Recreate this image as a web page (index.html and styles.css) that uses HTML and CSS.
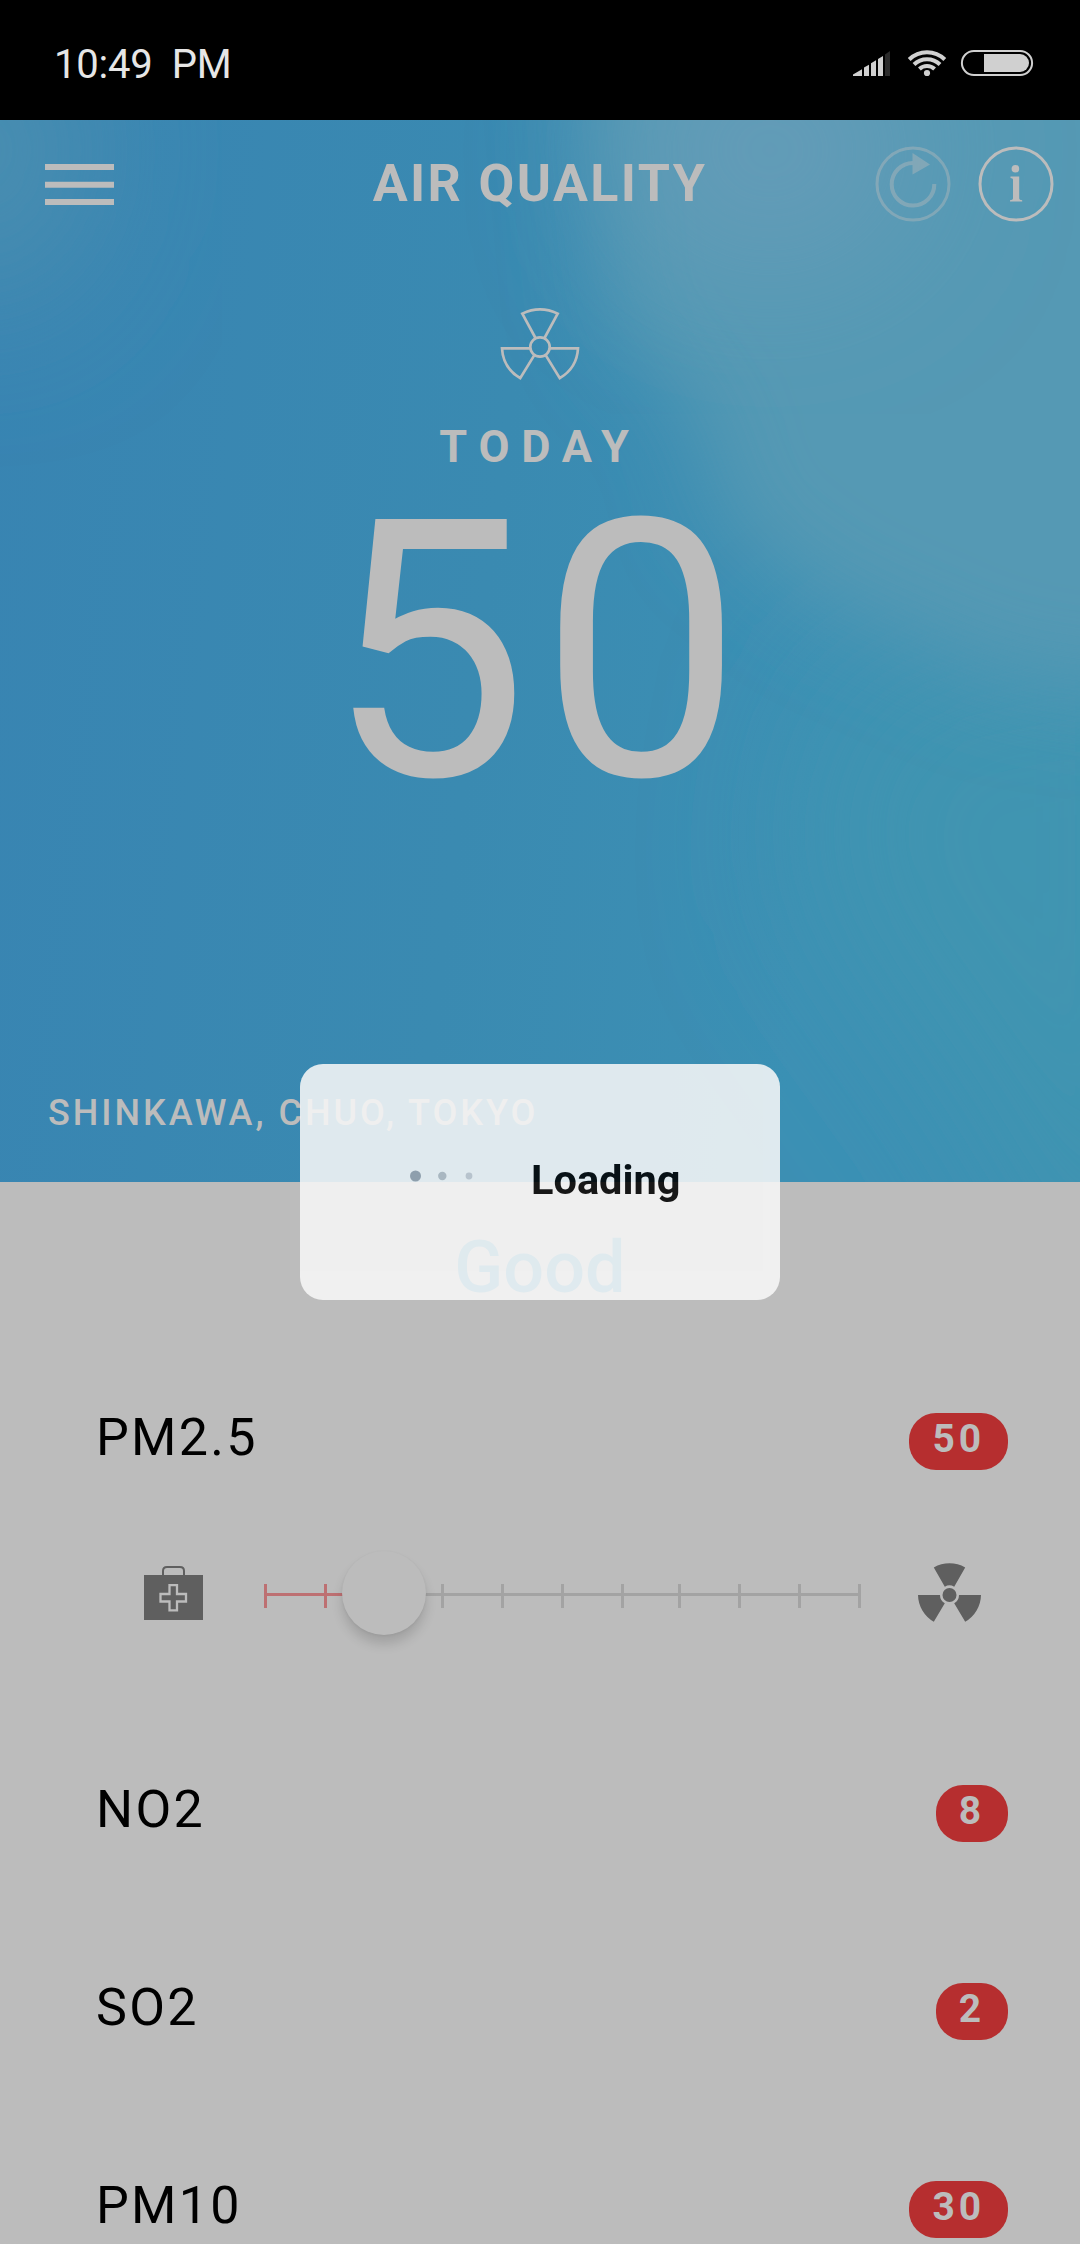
FILE: index.html
```html
<!DOCTYPE html>
<html lang="en">
<head>
<meta charset="utf-8">
<title>Air Quality</title>
<link rel="stylesheet" href="styles.css">
</head>
<body>
<div class="status">
  <div class="clock"><span>10:49</span><span>PM</span></div>
  <svg class="status-icons" width="182" height="30" viewBox="852 48 182 30">
    <path fill="#d0d0d0" d="M853 76v-1.600l9-5.200v6.800zM864 76v-8.500l5-2.700v11.200zM871 76v-12.800l5-3v15.800zM878 76v-17l5-3v20z"/>
    <path fill="#2b2b2b" d="M885 76V54.500l5-3.500v25z"/>
    <g fill="none" stroke="#d0d0d0" stroke-width="4"><path d="M909.200 59.500a25.500 25.500 0 0 1 35.600 0"/><path d="M914 64.500a18.500 18.500 0 0 1 26 0"/><path d="M919.400 69a11 11 0 0 1 15.200 0"/></g>
    <circle cx="927" cy="73" r="3.100" fill="#d0d0d0"/>
    <rect x="961.900" y="51" width="70.200" height="24" rx="12" fill="none" stroke="#d0d0d0" stroke-width="2"/>
    <path fill="#d0d0d0" d="M984 54h36a9 9 0 0 1 0 18h-36z"/>
  </svg>
</div>
<main>
  <section class="hero">
    <svg class="sky" viewBox="0 0 1080 1062" aria-hidden="true">
      <defs>
        <filter id="soft" x="-30%" y="-30%" width="160%" height="160%"><feGaussianBlur stdDeviation="45"/></filter>
        <filter id="softer" x="-60%" y="-60%" width="220%" height="220%"><feGaussianBlur stdDeviation="75"/></filter>
      </defs>
      <path fill="#3f94b1" filter="url(#softer)" d="M840 560L1200 480V1200H1080L980 1010L800 760z"/>
      <path fill="#5499b4" filter="url(#soft)" d="M580-120H1220V590L1000 560L820 480L720 400L700 300L610 200z"/>
      <ellipse fill="#659cb8" filter="url(#softer)" cx="770" cy="30" rx="140" ry="120"/>
      <ellipse fill="#4b8fb0" filter="url(#softer)" cx="-20" cy="30" rx="110" ry="150"/>
    </svg>
    <header class="bar">
      <svg width="69" height="42" viewBox="0 0 69 42" fill="#bcbcbc"><path d="M0 0h69v6H0zM0 17.800h69v6H0zM0 35h69v6H0z"/></svg>
      <h1>AIR QUALITY</h1>
      <div class="actions">
        <svg class="refresh" width="76" height="76" viewBox="-38 -38 76 76"><circle r="36" fill="none" stroke="#bcbcbc" stroke-width="3"/><path d="M0-21A21.300 21.300 0 1 0 21.300 0" fill="none" stroke="#bcbcbc" stroke-width="4"/><path fill="#bcbcbc" d="M-.5-31L17-19.500-.5-9.500z"/></svg>
        <svg width="76" height="76" viewBox="-38 -38 76 76"><circle r="36" fill="none" stroke="#bcbcbc" stroke-width="3"/><g fill="#bcbcbc"><circle cx="-.6" cy="-15.200" r="3.800"/><path d="M-5.500-7.500H3.200V14.500q0 1.500 3 1.700v1.300H-6v-1.300q3-.2 3-1.700v-19q0-1.200-2.500-1.500z"/></g></svg>
      </div>
    </header>
    <svg class="hazard" width="84" height="78" viewBox="-42 -42 84 78" fill="none" stroke="#bcbcbc" stroke-width="2.700">
      <circle r="9.700"/>
      <path d="M-4.500-9L-17.700-33.400Q0-42 17.700-33.400L4.500-9M-10 1.300H-38Q-37 21-19.800 31.200L-5.800 8.400M10 1.300H38Q37 21 19.800 31.200L5.800 8.400"/>
    </svg>
    <p class="day">TODAY</p>
    <p class="index">50</p>
    <p class="place">SHINKAWA, CHUO, TOKYO</p>
  </section>
  <section class="levels">
    <h2>Good</h2>
    <div class="row first"><span class="name">PM2.5</span><span class="badge">50</span></div>
    <div class="scale">
      <svg width="59" height="56" viewBox="0 0 59 56"><path d="M19 10V5q0-4 4-4h13q4 0 4 4v5" fill="none" stroke="#5f5f5f" stroke-width="2"/><path fill="#5f5f5f" d="M0 9h59v45H0z"/><path d="M25.500 19.200h7.500v8.800h9v7.500h-9v8.800h-7.500v-8.800h-9V28h9z" fill="none" stroke="#bcbcbc" stroke-width="2.300"/></svg>
      <div class="slider">
        <i class="on"></i><i class="on"></i><i class="on"></i><i class="near"></i><i></i><i></i><i></i><i class="near"></i><i></i><i></i><i></i>
        <b class="knob"></b>
      </div>
      <svg width="63" height="60" viewBox="-31.500 -32 63 60" fill="#5f5f5f"><circle r="7"/><path d="M-4.700-8.300L-15.700-27.500A31.500 31.500 0 0 1 15.700-27.500L4.700-8.300A9.500 9.500 0 0 0-4.700-8.300zM-9.500 0H-31.500A31.500 31.500 0 0 0-15.700 26.700L-4.700 8.200A9.500 9.500 0 0 1-9.500 0zM9.500 0H31.500A31.500 31.500 0 0 1 15.700 26.700L4.700 8.200A9.500 9.500 0 0 0 9.500 0z"/></svg>
    </div>
    <div class="row"><span class="name">NO2</span><span class="badge">8</span></div>
    <div class="row"><span class="name">SO2</span><span class="badge">2</span></div>
    <div class="row"><span class="name">PM10</span><span class="badge">30</span></div>
  </section>
</main>
<div class="loading">
  <svg width="64" height="12" viewBox="0 0 64 12"><circle cx="5.500" cy="6" r="5.500" fill="#9ba2ad"/><circle cx="32.300" cy="6" r="4.200" fill="#b9bec4"/><circle cx="59" cy="6" r="3.400" fill="#c9ccd1"/></svg>
  <span>Loading</span>
</div>
</body>
</html>
```
FILE: styles.css
```css
* { box-sizing: border-box; margin: 0; padding: 0; }
body { width: 1080px; height: 2244px; overflow: hidden; position: relative; background: #bcbcbc; font-family: Roboto, sans-serif; }
svg { display: block; flex: none; }
.status { height: 120px; background: #000; display: flex; justify-content: space-between; padding: 0 46px 0 54px; }
.clock { display: flex; gap: 19px; padding-top: 41px; font-size: 40px; line-height: 47px; letter-spacing: -0.2px; color: #e6e6e6; }
.status-icons { margin-top: 48px; }
.hero {
  position: relative; isolation: isolate; overflow: hidden;
  height: 1062px;
  display: flex; flex-direction: column; align-items: center;
  color: #bcbcbc;
  background: linear-gradient(97deg, #3884b2 0%, #3a8ab1 45%, #3c90b4 75%);
}
.sky { position: absolute; inset: 0; z-index: -1; width: 100%; height: 100%; }
.bar { width: 100%; height: 129px; display: grid; grid-template-columns: 1fr auto 1fr; padding: 0 26px 0 45px; }
.bar > svg { margin-top: 44px; }
h1 { font-size: 52px; line-height: 60px; letter-spacing: 2.4px; padding-top: 34px; margin-left: -19px; }
.actions { display: flex; gap: 27px; justify-content: flex-end; padding-top: 26px; }
.refresh { opacity: .4; }
.hazard { margin-top: 56px; }
.day { font-size: 45px; font-weight: 700; line-height: 52px; letter-spacing: 11.8px; margin-top: 38px; }
.index { font-size: 360px; line-height: 320px; letter-spacing: 11.5px; margin-top: 19px; }
.place { align-self: flex-start; padding-left: 48px; margin-top: 280px; font-size: 36px; font-weight: 500; line-height: 42px; letter-spacing: 3px; }
.levels { height: 1062px; overflow: hidden; display: flex; flex-direction: column; }
h2 { font-size: 72px; font-weight: 500; line-height: 84px; text-align: center; color: #3b90b4; margin-top: 44px; }
.row { flex: none; height: 57px; margin-bottom: 141px; padding: 0 72px 0 96px; display: flex; justify-content: space-between; }
.row.first { margin-top: 103px; margin-bottom: 75px; }
.row:last-child { margin-bottom: 0; }
.name { font-size: 52px; line-height: 60px; letter-spacing: 2.3px; margin-top: -5px; color: #000; }
.badge { height: 57px; border-radius: 27px; padding: 3px 23px 0; background: #b62e2f; color: #bcbcbc; font-size: 39px; font-weight: 700; line-height: 46px; letter-spacing: 3.9px; }
.scale { flex: none; height: 96px; margin-bottom: 144px; padding: 0 99px 0 144px; display: flex; align-items: flex-start; }
.scale > svg { margin-top: 21px; }
.scale > svg:last-child { margin-left: 57px; margin-top: 18px; }
.slider { position: relative; width: 597px; height: 24px; margin: 39px 0 0 61px; display: flex; background: linear-gradient(90deg, #bd7072 120px, #a3a3a3 120px) 0 9px / 100% 3px no-repeat; }
.slider i { width: 3px; height: 24px; background: #a3a3a3; }
.slider i + i { margin-left: 57px; }
.slider i.near { margin-left: 54px; }
.slider i.on { background: #bd7072; }
.knob { position: absolute; left: 78px; top: -33px; width: 84px; height: 84px; border-radius: 50%; background: #bcbcbc; box-shadow: 0 9px 12px rgba(0,0,0,.14), 0 1px 3px rgba(0,0,0,.06); }
.loading { position: absolute; left: 300px; top: 1064px; width: 480px; height: 236px; border-radius: 23px; background: #f7f7f7; opacity: .876; display: flex; align-items: center; padding: 0 0 12px 110px; color: #000; font-size: 41.5px; font-weight: 700; }
.loading span { margin: 6px 0 0 57px; }
```
